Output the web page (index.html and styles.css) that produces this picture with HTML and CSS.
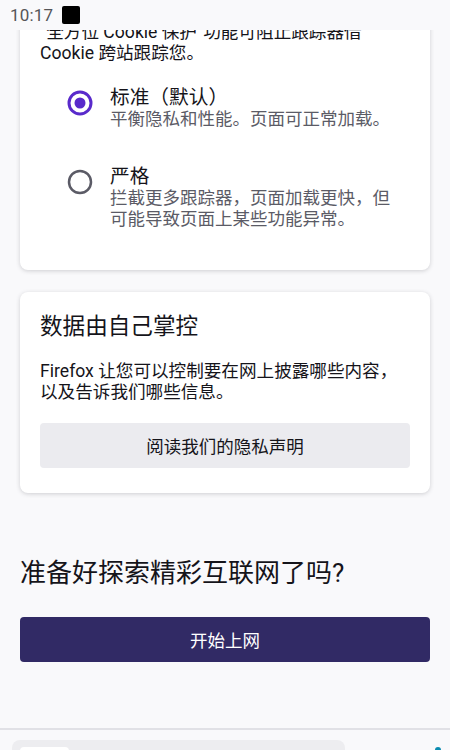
FILE: index.html
```html
<!DOCTYPE html>
<html lang="zh-CN">
<head>
<meta charset="utf-8">
<title>Firefox</title>
<link rel="stylesheet" href="styles.css">
</head>
<body>
<div class="status">
  <span class="time">10:17</span>
  <span class="status-box"></span>
</div>
<main class="page">
  <section class="card card-top">
    <p class="intro">“全方位 Cookie 保护”功能可阻止跟踪器借<br>Cookie 跨站跟踪您。</p>
    <div class="options">
      <div class="option">
        <svg class="radio" viewBox="0 0 26 26" width="26" height="26"><circle cx="13" cy="13" r="11" fill="none" stroke="#592acb" stroke-width="3"/><circle cx="13" cy="13" r="5.5" fill="#592acb"/></svg>
        <div class="opt-text">
          <div class="opt-title">标准（默认）</div>
          <div class="opt-sub">平衡隐私和性能。页面可正常加载。</div>
        </div>
      </div>
      <div class="option">
        <svg class="radio" viewBox="0 0 26 26" width="26" height="26"><circle cx="13" cy="13" r="11" fill="none" stroke="#5b5b66" stroke-width="2.5"/></svg>
        <div class="opt-text">
          <div class="opt-title">严格</div>
          <div class="opt-sub">拦截更多跟踪器，页面加载更快，但<br>可能导致页面上某些功能异常。</div>
        </div>
      </div>
    </div>
  </section>

  <section class="card card-data">
    <h2 class="card-title">数据由自己掌控</h2>
    <p class="body-text">Firefox 让您可以控制要在网上披露哪些内容，<br>以及告诉我们哪些信息。</p>
    <button class="btn-secondary">阅读我们的隐私声明</button>
  </section>

  <h1 class="ready">准备好探索精彩互联网了吗?</h1>
  <button class="btn-primary">开始上网</button>
</main>
<footer class="toolbar">
  <div class="urlbar"><span class="url-chip"></span></div>
  <span class="tool-dot"></span>
</footer>
</body>
</html>
```

FILE: styles.css
```css
* { box-sizing: border-box; }
html, body { margin: 0; padding: 0; }
body {
  width: 450px;
  height: 750px;
  overflow: hidden;
  background: #f9f9fb;
  font-family: Roboto, "Noto Sans CJK SC", sans-serif;
  color: #15141a;
  position: relative;
  display: flex;
  flex-direction: column;
}
.status {
  position: absolute;
  top: 0; left: 0; right: 0;
  height: 30px;
  background: #f9f9fb;
  display: flex;
  align-items: center;
  gap: 9px;
  padding-left: 10px;
  z-index: 5;
}
.time {
  font-family: Roboto, sans-serif;
  font-size: 17px;
  color: #555558;
  letter-spacing: 0.2px;
}
.status-box {
  width: 18px;
  height: 18px;
  background: #000;
  border-radius: 2px;
}
.page {
  height: 728px;
  flex: none;
  overflow: hidden;
  padding: 0 20px;
  display: flex;
  flex-direction: column;
}
.card {
  background: #fff;
  border-radius: 8px;
  box-shadow: 0 1px 4px rgba(58, 57, 68, 0.22);
  padding: 0 20px;
}
.card-top {
  padding-top: 22px;
  padding-bottom: 22px;
}
.intro {
  margin: 0;
  font-size: 17.6px;
  line-height: 21px;
}
.options {
  margin-top: 5px;
  display: flex;
  flex-direction: column;
}
.option {
  display: flex;
  align-items: flex-start;
  padding: 18px 0 18px 27px;
  gap: 17px;
}
.radio {
  flex: none;
  margin-top: 3px;
}
.opt-text { width: 290px; }
.opt-title {
  font-size: 19.7px;
  line-height: 22px;
  color: #15141a;
}
.opt-sub {
  font-size: 17.5px;
  line-height: 21px;
  color: #5b5b66;
}
.card-data {
  margin-top: 22px;
  padding-top: 21px;
  padding-bottom: 25px;
}
.card-title {
  margin: 0;
  font-size: 22.6px;
  line-height: 28px;
  font-weight: 400;
}
.body-text {
  margin: 20px 0 0;
  font-size: 17.6px;
  line-height: 21px;
}
.btn-secondary {
  display: block;
  width: 100%;
  margin-top: 20px;
  height: 45px;
  border: none;
  border-radius: 4px;
  background: #ebebef;
  color: #15141a;
  font-family: Roboto, "Noto Sans CJK SC", sans-serif;
  font-size: 17.5px;
}
.ready {
  margin: 64px 0 0;
  font-size: 26px;
  line-height: 32px;
  font-weight: 400;
  color: #15141a;
}
.btn-primary {
  display: block;
  width: 100%;
  margin-top: 28px;
  height: 45px;
  border: none;
  border-radius: 4px;
  background: #312a65;
  color: #fff;
  font-family: Roboto, "Noto Sans CJK SC", sans-serif;
  font-size: 17.5px;
}
.toolbar {
  flex: none;
  height: 22px;
  border-top: 2px solid #e1e1e6;
  background: #f9f9fb;
  padding: 10px 12px 0;
  display: flex;
  align-items: flex-start;
  justify-content: space-between;
  overflow: hidden;
}
.urlbar {
  width: 333px;
  height: 40px;
  border-radius: 8px;
  background: #ededf0;
  padding: 7px 8px;
  flex: none;
}
.url-chip {
  display: block;
  width: 49px;
  height: 30px;
  border-radius: 4px;
  background: #fff;
}
.tool-dot {
  width: 6px;
  height: 6px;
  border-radius: 50%;
  background: #0a8bb0;
  margin-top: 7px;
  margin-right: -3px;
}
```
